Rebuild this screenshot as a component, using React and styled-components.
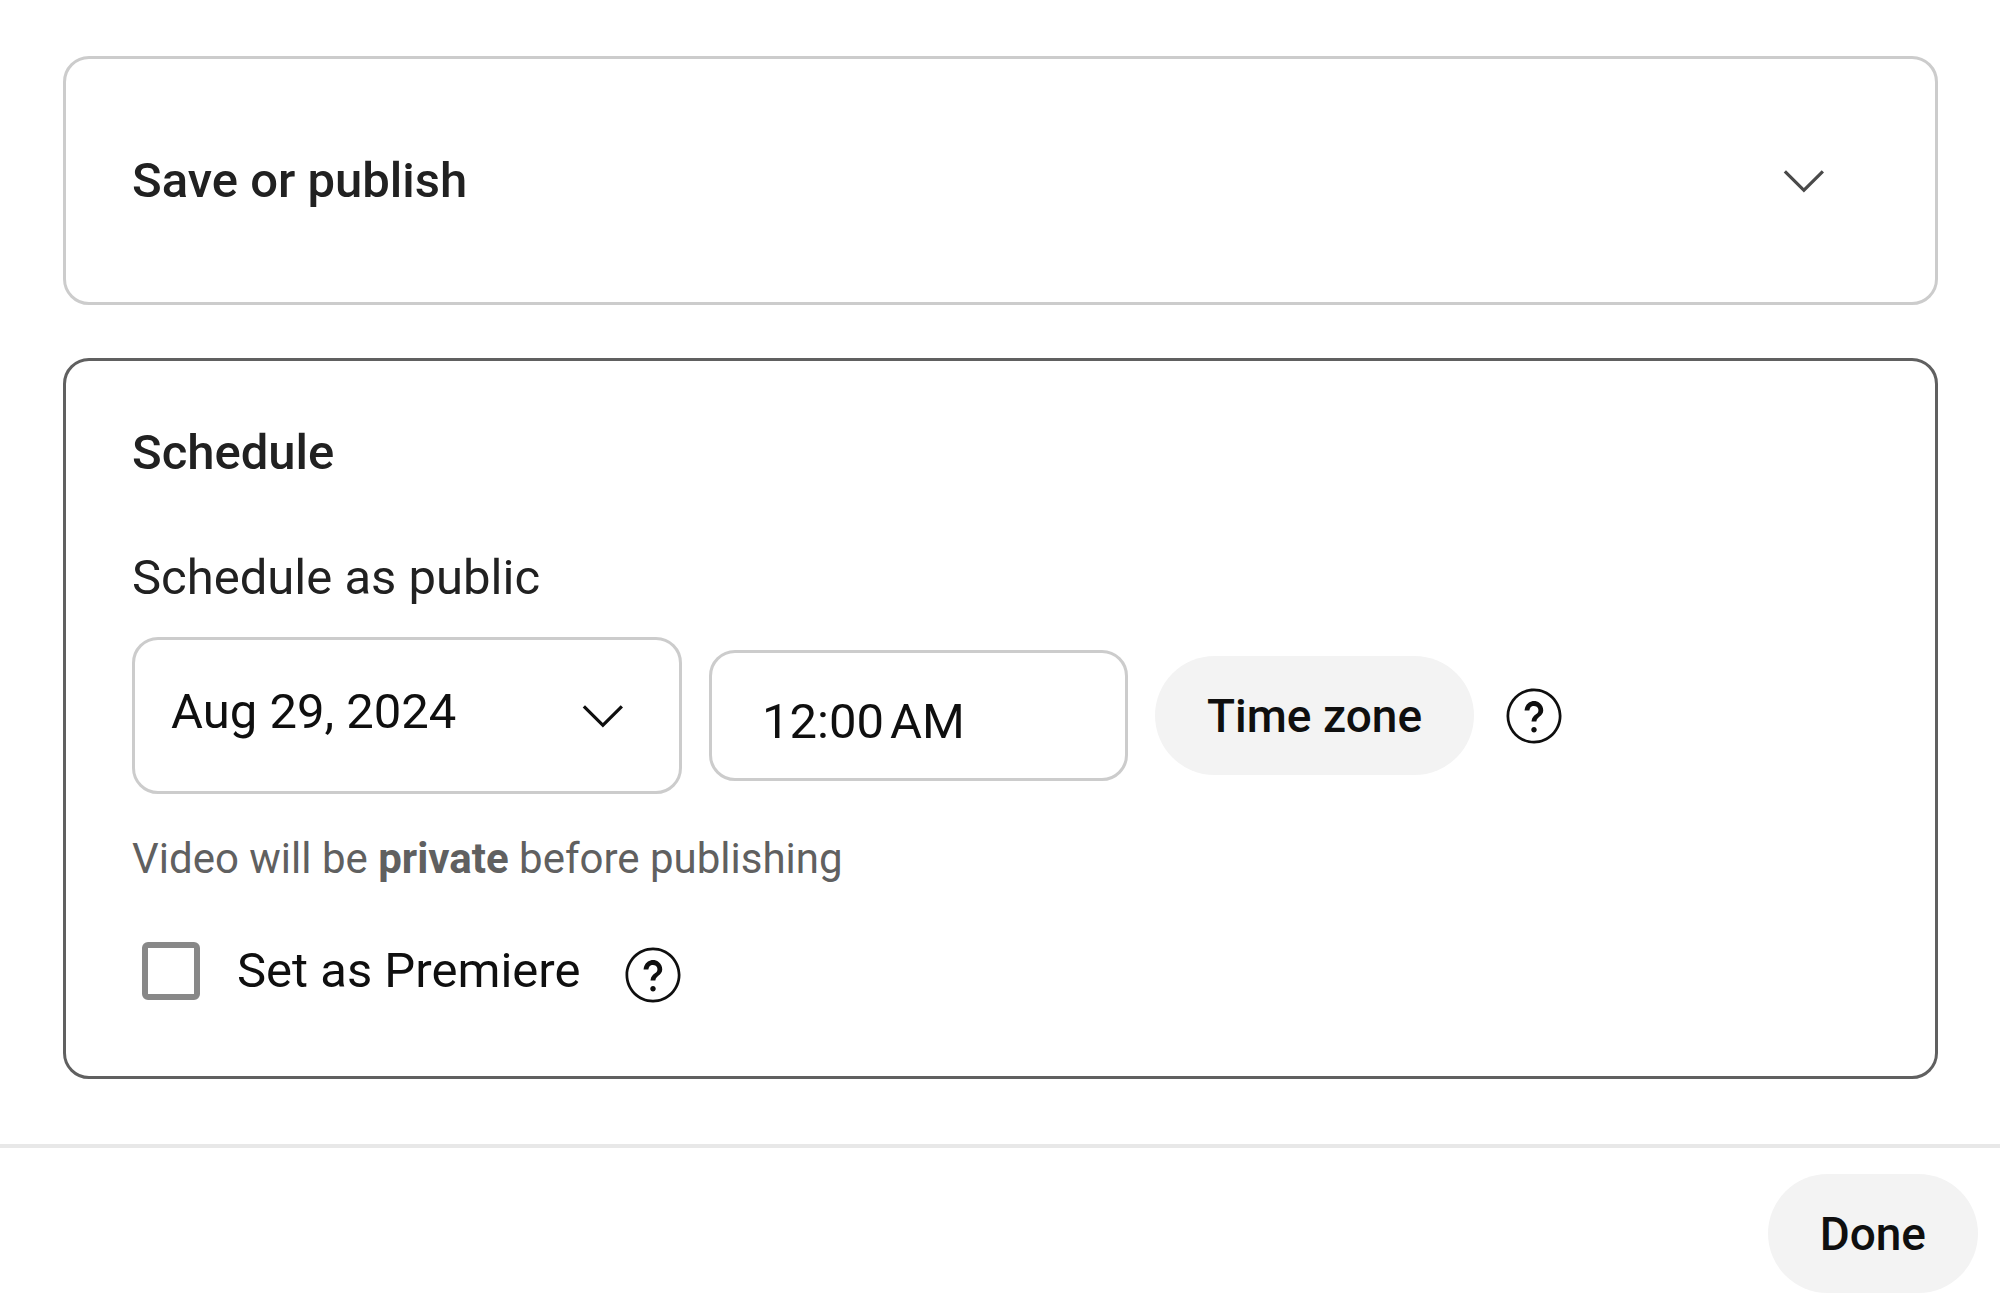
import React, { useState } from "react";
import styled, { createGlobalStyle } from "styled-components";

const GlobalStyle = createGlobalStyle`
  *, *::before, *::after { box-sizing: border-box; }
  body {
    margin: 0;
    background: #fff;
    color: #212121;
    font-family: Roboto, "Liberation Sans", Arial, sans-serif;
    font-size: 49px;
    line-height: 74px;
  }
  button, input, select { font: inherit; color: inherit; margin: 0; }
`;

const Content = styled.main`
  display: flex;
  flex-direction: column;
  gap: 53px;
  padding: 56px 62px 65px 63px;
`;

const Card = styled.section`
  border: 3px solid ${(p) => (p.$active ? "#606060" : "#ccc")};
  border-radius: 26px;
  padding: ${(p) => (p.$active ? "55px 66px 68px" : "0")};
`;

const Title = styled.h2`
  margin: 0;
  font-size: inherit;
  font-weight: 500;
`;

const CardToggle = styled.button`
  display: flex;
  align-items: center;
  justify-content: space-between;
  width: 100%;
  padding: 84px 92px 83px 66px;
  border: 0;
  background: none;
  color: #212121;
  font-weight: 500;
  text-align: left;
  cursor: pointer;
`;

const FieldLabel = styled.label`
  display: block;
  margin: 51px 0 22px;
`;

const Fields = styled.div`
  display: flex;
  flex-wrap: wrap;
  align-items: center;
  gap: 27px;
  color: #0f0f0f;
`;

const SelectBox = styled.div`
  display: grid;
  align-items: center;
  width: 550px;

  > * { grid-area: 1 / 1; }
  > svg { justify-self: end; margin-right: 40px; pointer-events: none; }
`;

const DateSelect = styled.select`
  width: 100%;
  height: 157px;
  padding: 0 120px 7px 36px;
  border: 3px solid #ccc;
  border-radius: 26px;
  background: #fff;
  appearance: none;
`;

const TimeInput = styled.input`
  width: 419px;
  height: 131px;
  padding: 11px 50px 0;
  border: 3px solid #ccc;
  border-radius: 26px;
  background: #fff;
`;

const Pill = styled.button`
  height: 119px;
  padding: 0 52px;
  border: 0;
  border-radius: 60px;
  background: #f3f3f3;
  color: #0f0f0f;
  font-size: 46px;
  font-weight: 500;
  cursor: pointer;
`;

const IconButton = styled.button`
  display: flex;
  padding: 0;
  border: 0;
  border-radius: 50%;
  background: none;
  color: #0f0f0f;
  cursor: pointer;
`;

const Icon = styled.svg`
  display: block;
  flex: none;
  width: ${(p) => p.$size}px;
  height: ${(p) => p.$size}px;
  fill: ${(p) => p.$color || "currentColor"};
`;

const Hint = styled.p`
  margin: 35px 0 45px;
  color: #606060;
  font-size: 42px;
  line-height: 60px;
`;

const PremiereRow = styled.div`
  display: flex;
  align-items: flex-end;
  gap: 40px;
  padding-left: 10px;
  color: #0f0f0f;
`;

const CheckLabel = styled.label`
  display: flex;
  align-items: center;
  gap: 37px;
`;

const Checkbox = styled.input`
  width: 58px;
  height: 58px;
  border: 6px solid #888;
  border-radius: 6px;
  background: #fff;
  appearance: none;

  &:checked { background: #606060; }
`;

const Footer = styled.footer`
  display: flex;
  justify-content: flex-end;
  padding: 26px 22px 18px;
  border-top: 4px solid #e8e8e8;
`;

function Chevron({ color }) {
  return (
    <Icon $size={76} $color={color} viewBox="0 0 24 24" aria-hidden="true">
      <path d="M18 9.28l-6.35 6.35-6.37-6.35.72-.71 5.64 5.65 5.65-5.65z" />
    </Icon>
  );
}

function Help({ label }) {
  return (
    <IconButton type="button" aria-label={label}>
      <Icon $size={66} viewBox="0 0 24 24" aria-hidden="true">
        <path d="M15.36,9.96c0,1.09-0.67,1.67-1.31,2.24c-0.53,0.47-1.03,0.9-1.16,1.6L12.85,14h-1.75l0.03-0.28c0.14-1.17,0.8-1.76,1.47-2.27c0.52-0.4,1.01-0.77,1.01-1.49c0-0.51-0.23-0.97-0.63-1.29c-0.4-0.31-0.92-0.42-1.42-0.29c-0.59,0.15-1.05,0.67-1.19,1.34L10.32,10H8.57l0.06-0.42c0.2-1.4,1.15-2.53,2.42-2.87c1.05-0.29,2.14-0.08,2.98,0.57C14.88,7.92,15.36,8.9,15.36,9.96z M12,18c0.55,0,1-0.45,1-1s-0.45-1-1-1s-1,0.45-1,1S11.45,18,12,18z M12,3c-4.96,0-9,4.04-9,9s4.04,9,9,9s9-4.04,9-9S16.96,3,12,3 M12,2c5.52,0,10,4.48,10,10s-4.48,10-10,10S2,17.52,2,12S6.48,2,12,2L12,2z" />
      </Icon>
    </IconButton>
  );
}

export default function App() {
  const [time, setTime] = useState("12:00\u202FAM");
  const [premiere, setPremiere] = useState(false);

  return (
    <>
      <GlobalStyle />
      <Content>
        <Card>
          <Title>
            <CardToggle type="button" aria-expanded="false">
              Save or publish
              <Chevron color="#4a4a4a" />
            </CardToggle>
          </Title>
        </Card>
        <Card $active>
          <Title>Schedule</Title>
          <FieldLabel htmlFor="date">Schedule as public</FieldLabel>
          <Fields>
            <SelectBox>
              <DateSelect id="date" defaultValue="2024-08-29">
                <option value="2024-08-29">Aug 29, 2024</option>
              </DateSelect>
              <Chevron />
            </SelectBox>
            <TimeInput
              type="text"
              aria-label="Time"
              value={time}
              onChange={(e) => setTime(e.target.value)}
            />
            <Pill type="button">Time zone</Pill>
            <Help label="About time zones" />
          </Fields>
          <Hint>
            Video will be <b>private</b> before publishing
          </Hint>
          <PremiereRow>
            <CheckLabel>
              <Checkbox
                type="checkbox"
                checked={premiere}
                onChange={(e) => setPremiere(e.target.checked)}
              />
              Set as Premiere
            </CheckLabel>
            <Help label="About Premieres" />
          </PremiereRow>
        </Card>
      </Content>
      <Footer>
        <Pill type="button">Done</Pill>
      </Footer>
    </>
  );
}
